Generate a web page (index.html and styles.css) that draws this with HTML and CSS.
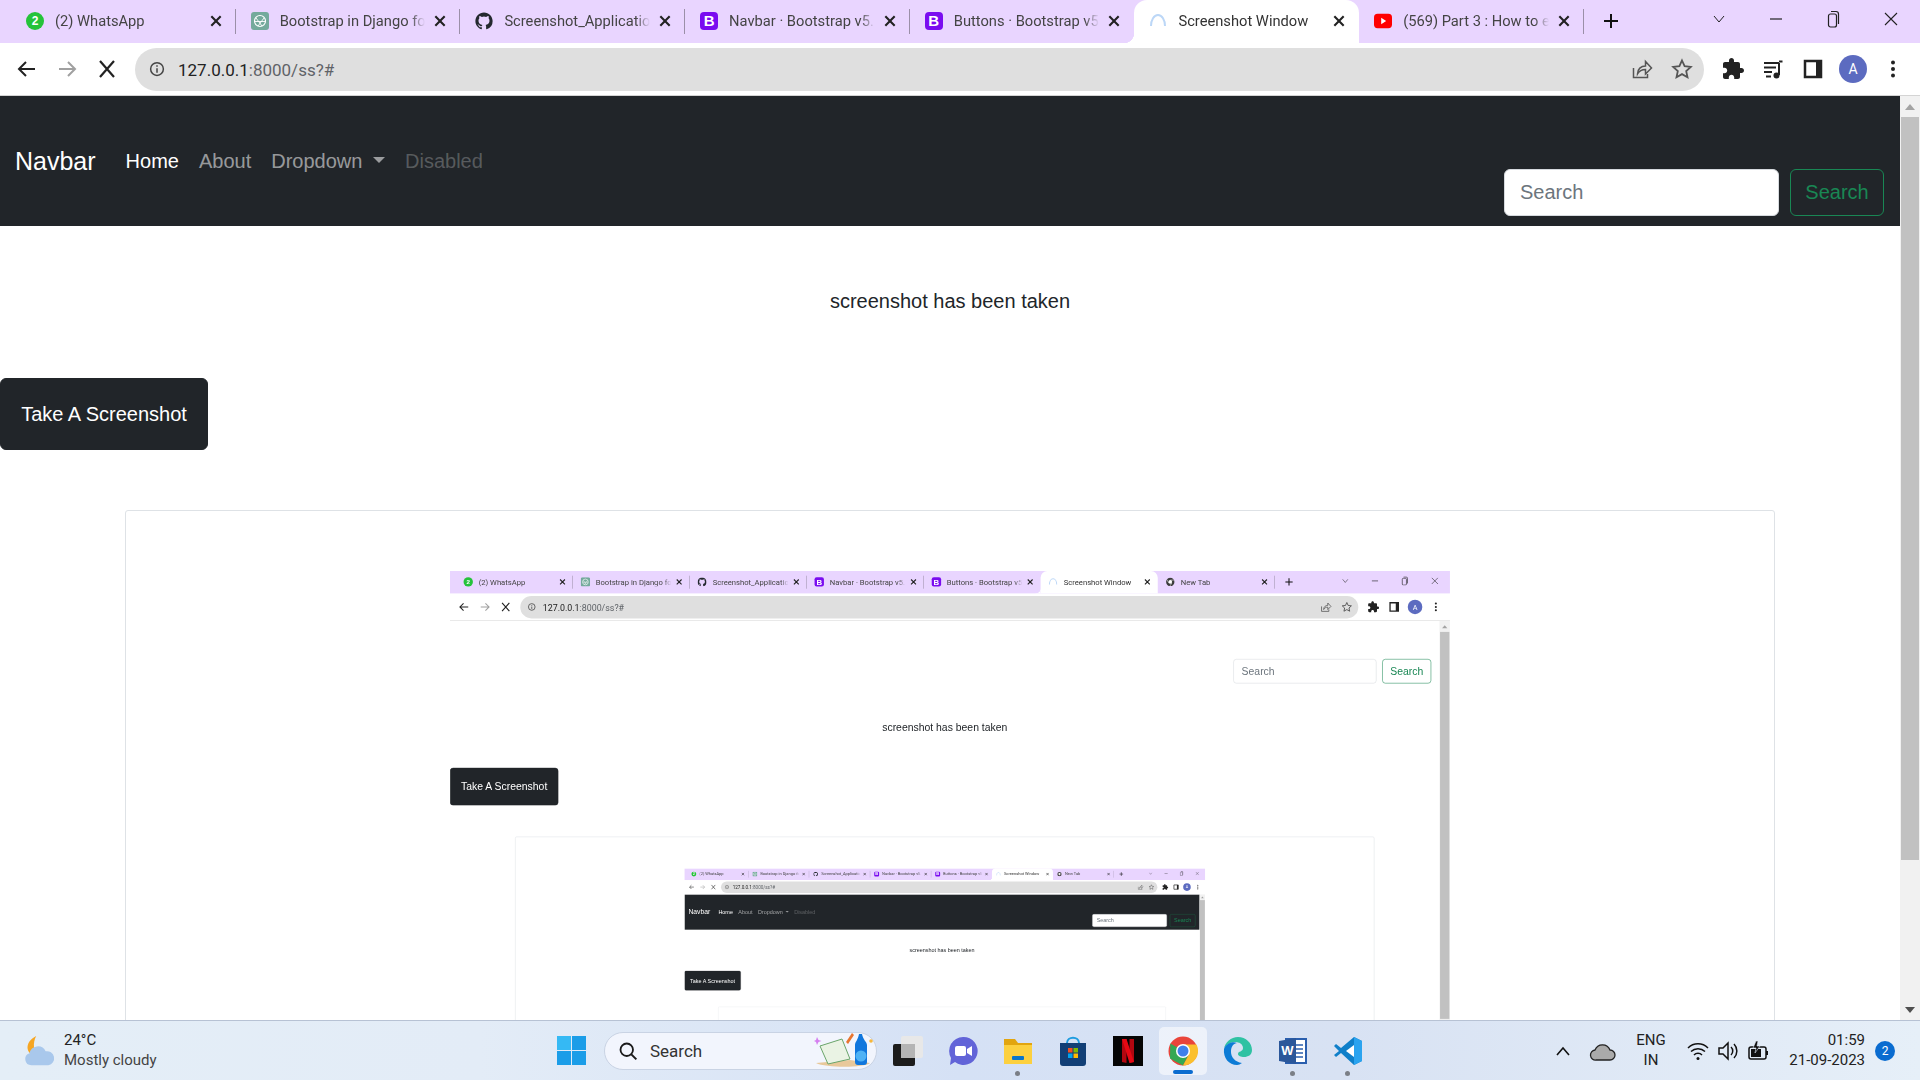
FILE: index.html
```html
<!DOCTYPE html>
<html lang="en">
<head>
<meta charset="utf-8">
<title>Screenshot Window</title>
<link rel="stylesheet" href="styles.css">
</head>
<body>
<svg class="defs" aria-hidden="true">
  <symbol id="i-x" viewBox="0 0 12 12"><path d="M2 2l8 8M10 2l-8 8" fill="none" stroke="currentColor" stroke-width="1.8"/></symbol>
  <symbol id="i-back" viewBox="0 0 24 24"><path d="M20 12H5M11 5l-7 7 7 7" fill="none" stroke="currentColor" stroke-width="2"/></symbol>
  <symbol id="i-fwd" viewBox="0 0 24 24"><path d="M4 12h15M13 5l7 7-7 7" fill="none" stroke="currentColor" stroke-width="2"/></symbol>
  <symbol id="i-stop" viewBox="0 0 24 24"><path d="M5 4l14 16M19 4L5 20" fill="none" stroke="currentColor" stroke-width="2.2"/></symbol>
  <symbol id="i-info" viewBox="0 0 24 24"><circle cx="12" cy="12" r="8.5" fill="none" stroke="currentColor" stroke-width="2"/><path d="M12 11v6M12 7v2" stroke="currentColor" stroke-width="2"/></symbol>
  <symbol id="i-share" viewBox="0 0 24 24"><path d="M3.5 11v9.500h14V17M7.500 17c0-5 3.500-8 8-8V4.500l6 6.500-6 6v-4.500c-3.500 0-6 1-8 4.500z" fill="none" stroke="currentColor" stroke-width="1.500"/></symbol>
  <symbol id="i-star" viewBox="0 0 24 24"><path d="M12 3.500l2.600 5.700 6.200.7-4.600 4.200 1.300 6.100-5.500-3.100-5.500 3.100 1.300-6.100-4.600-4.200 6.200-.7z" fill="none" stroke="currentColor" stroke-width="1.800"/></symbol>
  <symbol id="i-puzzle" viewBox="0 0 24 24"><path d="M20.500 11H19V7c0-1.100-.9-2-2-2h-4V3.500C13 2.120 11.880 1 10.500 1S8 2.120 8 3.500V5H4c-1.100 0-2 .9-2 2v3.800h1.500c1.490 0 2.700 1.210 2.700 2.700s-1.210 2.700-2.700 2.700H2V20c0 1.100.9 2 2 2h3.800v-1.500c0-1.490 1.210-2.700 2.700-2.700 1.490 0 2.700 1.210 2.700 2.700V22H17c1.100 0 2-.9 2-2v-4h1.500c1.380 0 2.500-1.120 2.500-2.500S21.880 11 20.500 11z" fill="currentColor"/></symbol>
  <symbol id="i-queue" viewBox="0 0 24 24"><path d="M3 6h15M3 10.500h12M3 15h8M5 19.500h5" stroke="currentColor" stroke-width="2" fill="none"/><path d="M18 6v12" stroke="currentColor" stroke-width="2"/><path d="M21.500 4.500H18" stroke="currentColor" stroke-width="2"/><circle cx="15.500" cy="18.500" r="3" fill="currentColor"/></symbol>
  <symbol id="i-panel" viewBox="0 0 24 24"><path d="M4 4h16v16H4z" fill="none" stroke="currentColor" stroke-width="2.500"/><path d="M15 4h5v16h-5z" fill="currentColor"/></symbol>
  <symbol id="i-dots" viewBox="0 0 24 24"><circle cx="12" cy="5.500" r="2" fill="currentColor"/><circle cx="12" cy="12" r="2" fill="currentColor"/><circle cx="12" cy="18.500" r="2" fill="currentColor"/></symbol>
  <symbol id="f-gpt" viewBox="0 0 18 18"><rect width="18" height="18" rx="3" fill="#74aa9c"/><circle cx="9" cy="9" r="5.500" fill="none" stroke="#fff" stroke-width="1.200"/><path d="M5 6l6 8M13 6l-6 8M4 9.500h10" stroke="#fff" stroke-width=".9"/></symbol>
  <symbol id="f-gh" viewBox="0 0 24 24"><path d="M12 .5C5.650.5.5 5.650.5 12c0 5.080 3.290 9.390 7.860 10.910.58.110.79-.25.79-.56v-2c-3.200.7-3.870-1.370-3.870-1.370-.52-1.330-1.280-1.680-1.280-1.680-1.040-.71.08-.7.08-.7 1.150.08 1.760 1.180 1.760 1.180 1.030 1.750 2.690 1.250 3.340.95.1-.74.4-1.250.73-1.540-2.550-.29-5.240-1.280-5.240-5.690 0-1.260.45-2.280 1.180-3.090-.12-.29-.51-1.460.11-3.050 0 0 .96-.31 3.150 1.180a10.900 10.900 0 0 1 5.740 0c2.190-1.490 3.150-1.180 3.150-1.180.62 1.590.23 2.760.11 3.050.73.81 1.180 1.830 1.180 3.090 0 4.420-2.690 5.400-5.250 5.680.41.36.78 1.060.78 2.140v3.170c0 .31.21.67.8.56A11.500 11.500 0 0 0 23.500 12C23.500 5.650 18.350.5 12 .5z" fill="#24292f"/></symbol>
  <symbol id="f-spin" viewBox="0 0 18 18"><path d="M2 14C2 8 5 3 9 3s7 5 7 11" fill="none" stroke="#bcd7f7" stroke-width="2"/></symbol>
  <symbol id="f-yt" viewBox="0 0 20 18"><rect y="1" width="20" height="16" rx="4" fill="#f00"/><path d="M8 5.500v7l5.500-3.500z" fill="#fff"/></symbol>
  <symbol id="f-new" viewBox="0 0 18 18"><circle cx="9" cy="9" r="8" fill="#3c3c3c"/><circle cx="9" cy="9" r="3.500" fill="#fff"/><path d="M9 5.500h7M6 10.800L2.500 4.500M12 10.800l-3.500 6" stroke="#fff" stroke-width="1"/></symbol>
  <symbol id="w-chev" viewBox="0 0 14 14"><path d="M2 4l5 6 5-6" fill="none" stroke="currentColor" stroke-width="1"/></symbol>
  <symbol id="w-min" viewBox="0 0 14 14"><path d="M1 7h12" stroke="currentColor" stroke-width="1.200"/></symbol>
  <symbol id="w-max" viewBox="0 0 14 18"><rect x="2.500" y="4" width="8" height="13" rx="2" fill="none" stroke="currentColor" stroke-width="1.200"/><path d="M5 1.500h5a2.500 2.500 0 0 1 2.500 2.500v10" fill="none" stroke="currentColor" stroke-width="1.200"/></symbol>
  <symbol id="w-close" viewBox="0 0 14 14"><path d="M1 1l12 12M13 1L1 13" stroke="currentColor" stroke-width="1.100"/></symbol>
  <symbol id="w-plus" viewBox="0 0 16 16"><path d="M8 1v14M1 8h14" stroke="currentColor" stroke-width="2"/></symbol>
</svg>

<div class="screen">
  <div class="window">
    <div class="tabbar">
      <div class="tab"><span class="fav fav-wa">2</span><span class="tab-title">(2) WhatsApp</span><svg class="tab-x"><use href="#i-x"/></svg></div>
      <div class="tab"><svg class="fav"><use href="#f-gpt"/></svg><span class="tab-title">Bootstrap in Django fo</span><svg class="tab-x"><use href="#i-x"/></svg></div>
      <div class="tab"><svg class="fav"><use href="#f-gh"/></svg><span class="tab-title">Screenshot_Applicatio</span><svg class="tab-x"><use href="#i-x"/></svg></div>
      <div class="tab"><span class="fav fav-bs">B</span><span class="tab-title">Navbar · Bootstrap v5.</span><svg class="tab-x"><use href="#i-x"/></svg></div>
      <div class="tab tab-plain"><span class="fav fav-bs">B</span><span class="tab-title">Buttons · Bootstrap v5</span><svg class="tab-x"><use href="#i-x"/></svg></div>
      <div class="tab tab-active"><svg class="fav"><use href="#f-spin"/></svg><span class="tab-title">Screenshot Window</span><svg class="tab-x"><use href="#i-x"/></svg></div>
      <div class="tab"><svg class="fav"><use href="#f-yt"/></svg><span class="tab-title">(569) Part 3 : How to e</span><svg class="tab-x"><use href="#i-x"/></svg></div>
      <svg class="new-tab"><use href="#w-plus"/></svg>
      <div class="win-ctrls">
        <svg class="win-btn"><use href="#w-chev"/></svg>
        <svg class="win-btn"><use href="#w-min"/></svg>
        <svg class="win-btn win-tall"><use href="#w-max"/></svg>
        <svg class="win-btn win-x"><use href="#w-close"/></svg>
      </div>
    </div>
    <div class="toolbar">
      <div class="tbtn"><svg><use href="#i-back"/></svg></div>
      <div class="tbtn tbtn-off"><svg><use href="#i-fwd"/></svg></div>
      <div class="tbtn"><svg><use href="#i-stop"/></svg></div>
      <div class="urlbar">
        <svg class="url-info"><use href="#i-info"/></svg>
        <span class="url"><span class="url-host">127.0.0.1</span>:8000/ss?#</span>
        <div class="tbtn tbtn-soft"><svg><use href="#i-share"/></svg></div>
        <div class="tbtn tbtn-soft"><svg><use href="#i-star"/></svg></div>
      </div>
      <div class="tbtn"><svg><use href="#i-puzzle"/></svg></div>
      <div class="tbtn"><svg><use href="#i-queue"/></svg></div>
      <div class="tbtn"><svg><use href="#i-panel"/></svg></div>
      <div class="tbtn"><span class="avatar">A</span></div>
      <div class="tbtn"><svg><use href="#i-dots"/></svg></div>
    </div>
    <div class="viewport">
      <div class="page">
        <nav class="navbar">
          <div class="nav-left">
            <a class="brand">Navbar</a>
            <a class="nav-link nav-active">Home</a>
            <a class="nav-link">About</a>
            <a class="nav-link">Dropdown <span class="caret"></span></a>
            <a class="nav-link nav-disabled">Disabled</a>
          </div>
          <form class="search-form">
            <input class="search-input" placeholder="Search">
            <button class="search-btn" type="button">Search</button>
          </form>
        </nav>
        <p class="message">screenshot has been taken</p>
        <button class="shot-btn" type="button">Take A Screenshot</button>
        <div class="frame">

          <!-- first nested capture: the page had a white navbar at that moment -->
          <div class="shot">
            <div class="window window-shot">
              <div class="tabbar">
                <div class="tab"><span class="fav fav-wa">2</span><span class="tab-title">(2) WhatsApp</span><svg class="tab-x"><use href="#i-x"/></svg></div>
                <div class="tab"><svg class="fav"><use href="#f-gpt"/></svg><span class="tab-title">Bootstrap in Django fo</span><svg class="tab-x"><use href="#i-x"/></svg></div>
                <div class="tab"><svg class="fav"><use href="#f-gh"/></svg><span class="tab-title">Screenshot_Applicatio</span><svg class="tab-x"><use href="#i-x"/></svg></div>
                <div class="tab"><span class="fav fav-bs">B</span><span class="tab-title">Navbar · Bootstrap v5.</span><svg class="tab-x"><use href="#i-x"/></svg></div>
                <div class="tab tab-plain"><span class="fav fav-bs">B</span><span class="tab-title">Buttons · Bootstrap v5</span><svg class="tab-x"><use href="#i-x"/></svg></div>
                <div class="tab tab-active"><svg class="fav"><use href="#f-spin"/></svg><span class="tab-title">Screenshot Window</span><svg class="tab-x"><use href="#i-x"/></svg></div>
                <div class="tab"><svg class="fav"><use href="#f-new"/></svg><span class="tab-title">New Tab</span><svg class="tab-x"><use href="#i-x"/></svg></div>
                <svg class="new-tab"><use href="#w-plus"/></svg>
                <div class="win-ctrls">
                  <svg class="win-btn"><use href="#w-chev"/></svg>
                  <svg class="win-btn"><use href="#w-min"/></svg>
                  <svg class="win-btn win-tall"><use href="#w-max"/></svg>
                  <svg class="win-btn win-x"><use href="#w-close"/></svg>
                </div>
              </div>
              <div class="toolbar">
                <div class="tbtn"><svg><use href="#i-back"/></svg></div>
                <div class="tbtn tbtn-off"><svg><use href="#i-fwd"/></svg></div>
                <div class="tbtn"><svg><use href="#i-stop"/></svg></div>
                <div class="urlbar">
                  <svg class="url-info"><use href="#i-info"/></svg>
                  <span class="url"><span class="url-host">127.0.0.1</span>:8000/ss?#</span>
                  <div class="tbtn tbtn-soft"><svg><use href="#i-share"/></svg></div>
                  <div class="tbtn tbtn-soft"><svg><use href="#i-star"/></svg></div>
                </div>
                <div class="tbtn"><svg><use href="#i-puzzle"/></svg></div>
                <div class="tbtn"><svg><use href="#i-panel"/></svg></div>
                <div class="tbtn"><span class="avatar">A</span></div>
                <div class="tbtn"><svg><use href="#i-dots"/></svg></div>
              </div>
              <div class="viewport">
                <div class="page">
                  <nav class="navbar navbar-light">
                    <div class="nav-left"></div>
                    <form class="search-form">
                      <input class="search-input" placeholder="Search">
                      <button class="search-btn" type="button">Search</button>
                    </form>
                  </nav>
                  <p class="message">screenshot has been taken</p>
                  <button class="shot-btn" type="button">Take A Screenshot</button>
                  <div class="frame">

                    <!-- second nested capture -->
                    <div class="shot">
                      <div class="window window-shot">
                        <div class="tabbar">
                          <div class="tab"><span class="fav fav-wa">2</span><span class="tab-title">(2) WhatsApp</span><svg class="tab-x"><use href="#i-x"/></svg></div>
                          <div class="tab"><svg class="fav"><use href="#f-gpt"/></svg><span class="tab-title">Bootstrap in Django fo</span><svg class="tab-x"><use href="#i-x"/></svg></div>
                          <div class="tab"><svg class="fav"><use href="#f-gh"/></svg><span class="tab-title">Screenshot_Applicatio</span><svg class="tab-x"><use href="#i-x"/></svg></div>
                          <div class="tab"><span class="fav fav-bs">B</span><span class="tab-title">Navbar · Bootstrap v5.</span><svg class="tab-x"><use href="#i-x"/></svg></div>
                          <div class="tab tab-plain"><span class="fav fav-bs">B</span><span class="tab-title">Buttons · Bootstrap v5</span><svg class="tab-x"><use href="#i-x"/></svg></div>
                          <div class="tab tab-active"><svg class="fav"><use href="#f-spin"/></svg><span class="tab-title">Screenshot Window</span><svg class="tab-x"><use href="#i-x"/></svg></div>
                          <div class="tab"><svg class="fav"><use href="#f-new"/></svg><span class="tab-title">New Tab</span><svg class="tab-x"><use href="#i-x"/></svg></div>
                          <svg class="new-tab"><use href="#w-plus"/></svg>
                          <div class="win-ctrls">
                            <svg class="win-btn"><use href="#w-chev"/></svg>
                            <svg class="win-btn"><use href="#w-min"/></svg>
                            <svg class="win-btn win-tall"><use href="#w-max"/></svg>
                            <svg class="win-btn win-x"><use href="#w-close"/></svg>
                          </div>
                        </div>
                        <div class="toolbar">
                          <div class="tbtn"><svg><use href="#i-back"/></svg></div>
                          <div class="tbtn tbtn-off"><svg><use href="#i-fwd"/></svg></div>
                          <div class="tbtn"><svg><use href="#i-stop"/></svg></div>
                          <div class="urlbar">
                            <svg class="url-info"><use href="#i-info"/></svg>
                            <span class="url"><span class="url-host">127.0.0.1</span>:8000/ss?#</span>
                            <div class="tbtn tbtn-soft"><svg><use href="#i-share"/></svg></div>
                            <div class="tbtn tbtn-soft"><svg><use href="#i-star"/></svg></div>
                          </div>
                          <div class="tbtn"><svg><use href="#i-puzzle"/></svg></div>
                          <div class="tbtn"><svg><use href="#i-panel"/></svg></div>
                          <div class="tbtn"><span class="avatar">A</span></div>
                          <div class="tbtn"><svg><use href="#i-dots"/></svg></div>
                        </div>
                        <div class="viewport">
                          <div class="page">
                            <nav class="navbar">
                              <div class="nav-left">
                                <a class="brand">Navbar</a>
                                <a class="nav-link nav-active">Home</a>
                                <a class="nav-link">About</a>
                                <a class="nav-link">Dropdown <span class="caret"></span></a>
                                <a class="nav-link nav-disabled">Disabled</a>
                              </div>
                              <form class="search-form">
                                <input class="search-input" placeholder="Search">
                                <button class="search-btn" type="button">Search</button>
                              </form>
                            </nav>
                            <p class="message">screenshot has been taken</p>
                            <button class="shot-btn" type="button">Take A Screenshot</button>
                            <div class="frame"></div>
                          </div>
                          <div class="scrollbar"><span class="sb-arrow sb-up"></span><span class="sb-thumb"></span><span class="sb-track"></span><span class="sb-arrow sb-down"></span></div>
                        </div>
                      </div>
                    </div>

                  </div>
                </div>
                <div class="scrollbar"><span class="sb-arrow sb-up"></span><span class="sb-thumb"></span><span class="sb-track"></span><span class="sb-arrow sb-down"></span></div>
              </div>
            </div>
          </div>

        </div>
      </div>
      <div class="scrollbar"><span class="sb-arrow sb-up"></span><span class="sb-thumb"></span><span class="sb-track"></span><span class="sb-arrow sb-down"></span></div>
    </div>
  </div>

  <footer class="taskbar">
    <div class="tb-weather">
      <svg class="weather-icon" viewBox="0 0 36 34">
        <path d="M15 1c-6 3-10 8-9 14 1 5 6 8 12 7-6-4-7-13-3-21z" fill="#f6a623"/>
        <path d="M10 32a6.500 6.500 0 0 1-2-12.700 9 9 0 0 1 17-2 7.500 7.500 0 0 1 3 14.700z" fill="#a9c8ec"/>
      </svg>
      <div class="weather-text"><span class="temp">24°C</span><span class="cond">Mostly cloudy</span></div>
    </div>
    <svg class="start" viewBox="0 0 29 29">
      <path d="M0 0h14v14H0zM15 0h14v14H15zM0 15h14v14H0zM15 15h14v14H15z" fill="#1b9de8"/>
      <path d="M0 0h14v14H0z" fill="#35b9f4"/>
    </svg>
    <div class="tb-search">
      <svg class="tb-search-icon" viewBox="0 0 24 24"><circle cx="10.500" cy="10.500" r="7.500" fill="none" stroke="#1a1a1a" stroke-width="2.200"/><path d="M16 16l6 6" stroke="#1a1a1a" stroke-width="2.400"/></svg>
      <span class="tb-search-text">Search</span>
      <svg class="tb-search-art" viewBox="0 0 62 36">
        <path d="M2 30l34-3 20 3c-6 5-44 5-54 0z" fill="#e8c89a"/>
        <path d="M6 13l22-7 8 20-22 5z" fill="#eaf3e4" stroke="#6aa56a"/>
        <path d="M32 9l6-9 2 2-6 9z" fill="#e8752f"/>
        <path d="M41 12c0-3 3-5 4-11h3c1 6 5 8 5 11v17a3 3 0 0 1-3 3h-6a3 3 0 0 1-3-3z" fill="#1177dd"/>
        <circle cx="47" cy="23" r="5.500" fill="#4fb2f5"/>
        <path d="M3 4l1.500 3 3 1-3 1L3 12l-1-3-2-1 2-1z" fill="#d57ff0"/>
        <circle cx="57" cy="8" r="1.800" fill="#f6b73c"/>
      </svg>
    </div>
    <div class="tb-apps">
      <div class="app"><svg viewBox="0 0 30 30"><rect y="8" width="22" height="22" rx="2" fill="#1c1c1c"/><rect x="8" width="22" height="22" rx="2" fill="#e8e8e8"/><rect x="8" y="8" width="14" height="14" fill="#b5b5b5"/></svg></div>
      <div class="app"><svg viewBox="0 0 30 30"><path d="M15 1a14 14 0 1 1-8 25l-5 3 1-7A14 14 0 0 1 15 1z" fill="#6264d8"/><rect x="7" y="10" width="11" height="10" rx="2" fill="#fff"/><path d="M19 13l5-3v10l-5-3z" fill="#fff"/></svg></div>
      <div class="app app-dot"><svg viewBox="0 0 30 30"><path d="M1 3h11l3 4h14v6H1z" fill="#e2a50f"/><path d="M1 9h28v19H1z" fill="#fcd03f"/><rect x="9" y="20" width="12" height="4" rx="1" fill="#0a75c9"/></svg></div>
      <div class="app"><svg viewBox="0 0 30 30"><path d="M9 7c0-7 12-7 12 0" fill="none" stroke="#1f9de0" stroke-width="2"/><path d="M2 7h26v20a3 3 0 0 1-3 3H5a3 3 0 0 1-3-3z" fill="#123f76"/><path d="M10 12h4.500v4.500H10z" fill="#f25022"/><path d="M15.500 12H20v4.500h-4.500z" fill="#7fba00"/><path d="M10 17.500h4.500V22H10z" fill="#00a4ef"/><path d="M15.500 17.500H20V22h-4.500z" fill="#ffb900"/></svg></div>
      <div class="app"><svg viewBox="0 0 30 30"><rect width="30" height="30" fill="#050505"/><path d="M9 3h4.500v24L9 26zM16.500 3H21v23l-4.500 1z" fill="#b20710"/><path d="M9 3h4.500l7.500 23-4.500 1z" fill="#e50914"/></svg></div>
      <div class="app app-active">
        <svg viewBox="0 0 30 30"><circle cx="15" cy="15" r="14.500" fill="#e9443a"/><path d="M2.300 7.500L2 22.500 15 29.500 21 18z" fill="#34a853"/><path d="M15 8.500h13.500A14.500 14.500 0 0 1 15 29.500l6-11z" fill="#fbc02d"/><circle cx="15" cy="15" r="7" fill="#fff"/><circle cx="15" cy="15" r="5.500" fill="#3f80ea"/></svg>
      </div>
      <div class="app"><svg viewBox="0 0 30 30"><path d="M15 1c8 0 14 6 14 13 0 5-4 7-8 7-3 0-6-1-6-3 0-3 5-2 5-6 0-4-4-6-8-6C6 6 2 10 1 13 2 6 8 1 15 1z" fill="#2fc2a3"/><path d="M1 13c2-6 9-8 13-6-5 1-6 5-6 9 0 5 4 10 11 11-2 1-3 2-5 2C6 29 0 22 1 13z" fill="#0c7bd6"/></svg></div>
      <div class="app app-dot"><svg viewBox="0 0 30 30"><path d="M8 3h20v24H8z" fill="#fff" stroke="#2b5fae" stroke-width="2"/><path d="M18 9h7M18 13h7M18 17h7M18 21h7" stroke="#2b5fae" stroke-width="1.500"/><path d="M1 5l17-3v26L1 25z" fill="#2b579a"/><text x="9.500" y="19" class="word-w">W</text></svg></div>
      <div class="app app-dot"><svg viewBox="0 0 30 30"><path d="M21 1l8 4v20l-8 4L8 17l-5 4-2-2 5-4-5-5 2-2 5 4z" fill="#0f7fc9"/><path d="M21 1l8 4v20l-8 4z" fill="#2aa3ef"/><path d="M21 9v12l-8-6z" fill="#fff"/></svg></div>
    </div>
    <div class="tray">
      <svg class="tray-slot tray-chev" viewBox="0 0 40 14"><path d="M14 11l6-7 6 7" fill="none" stroke="#111" stroke-width="1.600"/></svg>
      <svg class="tray-slot tray-cloud" viewBox="0 0 40 22"><path d="M13 20a5 5 0 0 1-1-10 8 8 0 0 1 15 0 5 5 0 0 1 0 10z" fill="#aaa" stroke="#222" stroke-width="1.300"/></svg>
      <div class="tray-lang"><span>ENG</span><span>IN</span></div>
      <svg class="tray-icon" viewBox="0 0 24 24"><path d="M2 9a14 14 0 0 1 20 0M5 12.500a10 10 0 0 1 14 0M8 16a5.500 5.500 0 0 1 8 0" fill="none" stroke="#111" stroke-width="1.500"/><circle cx="12" cy="19.500" r="1.500" fill="#111"/></svg>
      <svg class="tray-icon" viewBox="0 0 24 24"><path d="M3 9h4l5-5v16l-5-5H3z" fill="none" stroke="#111" stroke-width="1.500"/><path d="M15 8a5.500 5.500 0 0 1 0 8M18 5a10 10 0 0 1 0 14" fill="none" stroke="#111" stroke-width="1.500"/></svg>
      <svg class="tray-icon" viewBox="0 0 24 24"><rect x="3" y="8" width="17" height="12" rx="2" fill="none" stroke="#111" stroke-width="1.500"/><rect x="5" y="10" width="10" height="8" fill="#111"/><path d="M20 12h2v4h-2z" fill="#111"/><path d="M10 2L7 9h3l-1 5 5-7h-3l1-5z" fill="#111" stroke="#dfe7f5" stroke-width=".6"/></svg>
      <div class="tray-clock"><span>01:59</span><span>21-09-2023</span></div>
      <span class="tray-badge">2</span>
    </div>
  </footer>
</div>
</body>
</html>
```

FILE: styles.css
```css
* { box-sizing: border-box; }
html, body { margin: 0; height: 100%; overflow: hidden; background: #fff; }
body { font-family: "Liberation Sans", Arial, sans-serif; color: #212529; }
.defs { display: none; }

.screen { height: 1080px; width: 1920px; display: flex; flex-direction: column; overflow: hidden; }
.window { flex: 1; min-height: 0; display: flex; flex-direction: column; }
.window-shot { flex: none; width: 1920px; height: 1080px; transform: scale(.5208); transform-origin: 0 0; }

/* tab strip */
.tabbar { height: 43px; flex: none; display: flex; align-items: stretch; background: #e9d5ff; padding-left: 11px; position: relative; font-family: Roboto, "Liberation Sans", sans-serif; }
.tab { width: 224.700px; flex: none; display: flex; align-items: center; padding: 0 13px 2px 15px; position: relative; color: #444; }
.tab::after { content: ""; position: absolute; right: 0; top: 9px; height: 25px; width: 1px; background: #9b8fa8; }
.tab-plain::after, .tab-active::after { display: none; }
.tab-active { background: #fff; border-radius: 13px 13px 0 0; color: #333; }
.tab-active::before { content: ""; position: absolute; left: -10px; bottom: 0; width: 10px; height: 10px; background: radial-gradient(circle at 0 0, transparent 10px, #fff 10.500px); }
.tab-title { flex: 1; min-width: 0; margin: 0 8px 0 11px; font-size: 14.700px; white-space: nowrap; -webkit-mask-image: linear-gradient(to right, #000 90%, transparent); mask-image: linear-gradient(to right, #000 90%, transparent); }
.tab-x { width: 14px; height: 14px; flex: none; color: #222; }
.fav { width: 18px; height: 18px; flex: none; display: flex; align-items: center; justify-content: center; }
.fav-wa { background: #25c33a; border-radius: 50%; color: #fff; font: 700 12px "Liberation Sans", sans-serif; }
.fav-bs { background: #7a0cf0; border-radius: 4px; color: #fff; font: 700 15px "Liberation Sans", sans-serif; }
.new-tab { width: 16px; height: 16px; margin: 13px 0 0 19px; color: #111; flex: none; }
.win-ctrls { margin-left: auto; display: flex; align-items: flex-start; padding-right: 0; color: #222; }
.win-btn { width: 14px; height: 14px; margin: 12px 21px 0 0; flex: none; }
.win-btn:first-child { margin-right: 43px; }
.win-tall { height: 18px; margin-top: 10px; margin-right: 44px; }
.win-btn:nth-child(2) { margin-right: 43px; }
.win-x { margin-right: 22px; }

/* toolbar */
.toolbar { height: 53px; flex: none; display: flex; align-items: center; background: #fff; border-bottom: 1px solid #d4d4d4; padding: 4px 7px; }
.tbtn { width: 40px; height: 40px; flex: none; display: flex; align-items: center; justify-content: center; color: #222; }
.tbtn svg { width: 24px; height: 24px; }
.tbtn-off { color: #a0a0a0; }
.tbtn-soft { color: #555; }
.urlbar { flex: 1; min-width: 0; height: 43px; margin: 0 9px 0 8px; background: #dfdfdf; border-radius: 22px; display: flex; align-items: center; padding: 0 2px 0 13px; }
.url-info { width: 18px; height: 18px; color: #444; flex: none; }
.url { flex: 1; margin-left: 12px; font: 17px Roboto, "Liberation Sans", sans-serif; color: #5f6368; padding-top: 1px; }
.url-host { color: #222; }
.avatar { width: 28px; height: 28px; border-radius: 50%; background: #5c6bc0; color: #fff; display: flex; align-items: center; justify-content: center; font: 14px Roboto, sans-serif; }

/* page */
.viewport { flex: 1; min-height: 0; display: flex; overflow: hidden; background: #fff; }
.page { flex: 1; min-width: 0; overflow: hidden; }
.navbar { height: 130px; background: #212529; display: flex; align-items: flex-start; justify-content: space-between; padding: 0 16px 0 15px; }
.nav-left { height: 130px; display: flex; align-items: center; }
.brand { font-size: 25px; line-height: 37px; color: #fff; margin-right: 20px; }
.nav-link { font-size: 20px; line-height: 30px; padding: 0 10px; color: rgba(255, 255, 255, .55); white-space: nowrap; }
.nav-active { color: #fff; }
.nav-disabled { color: rgba(255, 255, 255, .25); }
.caret { display: inline-block; margin-left: .255em; vertical-align: .255em; border-top: .3em solid; border-right: .3em solid transparent; border-left: .3em solid transparent; }
.search-form { display: flex; gap: 11px; margin-top: 73px; }
.search-input { width: 275px; height: 47px; border: 1px solid #d6dade; border-radius: 6px; background: #fff; padding: 0 15px; font: 20px "Liberation Sans", sans-serif; color: #212529; outline: 0; }
.search-input::placeholder { color: #6c757d; opacity: 1; }
.search-btn { width: 94px; height: 47px; border: 1px solid #198754; border-radius: 6px; background: transparent; color: #198754; font: 20px "Liberation Sans", sans-serif; padding: 0; }
.navbar-light { background: #fff; }
.message { margin: 60px 0 62px; font-size: 20px; line-height: 30px; text-align: center; color: #212529; }
.shot-btn { display: block; width: 208px; height: 72px; border: 1px solid #212529; border-radius: 6px; background: #212529; color: #fff; font: 20px "Liberation Sans", sans-serif; padding: 0; }
.frame { width: 1650px; height: 800px; margin: 60px 0 0 125px; padding-top: 60px; border: 1px solid #dee2e6; border-radius: 3px; background: #fff; }
.shot { width: 1000px; height: 563px; margin: 0 auto; overflow: hidden; filter: blur(.3px); }
.shot .shot { filter: blur(1px); }

/* page scrollbar */
.scrollbar { width: 20px; flex: none; display: flex; flex-direction: column; background: #f1f1f1; padding: 0 1px; }
.sb-arrow { height: 21px; flex: none; display: flex; align-items: center; justify-content: center; }
.sb-arrow::before { content: ""; border-left: 5px solid transparent; border-right: 5px solid transparent; }
.sb-up::before { border-bottom: 6px solid #a3a3a3; }
.sb-down::before { border-top: 6px solid #505050; }
.sb-thumb { height: 743px; flex: none; background: #c1c1c1; }
.sb-track { flex: 1; }

/* taskbar */
.taskbar { height: 60px; flex: none; display: flex; align-items: center; border-top: 1px solid #b7c2d4; background: linear-gradient(to right, #e4eef7 0%, #e3ecf7 25%, #d5e1f5 50%, #d8e2f3 70%, #e6eff8 100%); font-family: Roboto, "Liberation Sans", sans-serif; color: #222; }
.tb-weather { width: 557px; flex: none; display: flex; align-items: center; gap: 8px; padding-left: 22px; }
.weather-icon { width: 34px; height: 34px; flex: none; }
.weather-text { display: flex; flex-direction: column; font-size: 15px; line-height: 20px; padding-bottom: 2px; }
.cond { color: #444; }
.start { width: 29px; height: 29px; flex: none; }
.tb-search { width: 273px; height: 38px; margin-left: 18px; flex: none; display: flex; align-items: center; padding-left: 13px; border-radius: 19px; background: #f2f5fd; border: 1px solid #c9d3e4; }
.tb-search-icon { width: 20px; height: 20px; flex: none; }
.tb-search-text { margin-left: 12px; font-size: 17px; color: #333; }
.tb-search-art { width: 62px; height: 36px; margin-left: auto; flex: none; }
.tb-apps { display: flex; margin-left: 3px; height: 60px; align-items: center; }
.app { width: 55px; height: 48px; display: flex; align-items: center; justify-content: center; position: relative; }
.app svg { width: 30px; height: 30px; }
.app-active { width: 48px; margin: 0 3.500px; background: rgba(255, 255, 255, .55); border-radius: 5px; }
.app-active::after { content: ""; position: absolute; bottom: 1px; left: 14px; width: 20px; height: 4px; border-radius: 2px; background: #0a6cd0; }
.app-dot::after { content: ""; position: absolute; bottom: -1px; left: 25px; width: 5px; height: 5px; border-radius: 50%; background: #7b7f86; }
.word-w { font: 700 13px "Liberation Sans", sans-serif; fill: #fff; text-anchor: middle; }
.tray { margin-left: auto; display: flex; align-items: center; padding-right: 25px; }
.tray-slot { width: 40px; flex: none; }
.tray-chev { height: 14px; }
.tray-cloud { height: 22px; }
.tray-lang { width: 48px; margin: 0 8px 0 4px; padding-bottom: 2px; display: flex; flex-direction: column; align-items: center; font-size: 15px; line-height: 20px; }
.tray-icon { width: 30px; height: 24px; flex: none; }
.tray-clock { width: 92px; padding-bottom: 2px; display: flex; flex-direction: column; align-items: flex-end; font-size: 15px; line-height: 20px; }
.tray-badge { width: 20px; height: 20px; margin-left: 10px; border-radius: 50%; background: #0a6cd0; color: #fff; display: flex; align-items: center; justify-content: center; font-size: 12px; }
```
